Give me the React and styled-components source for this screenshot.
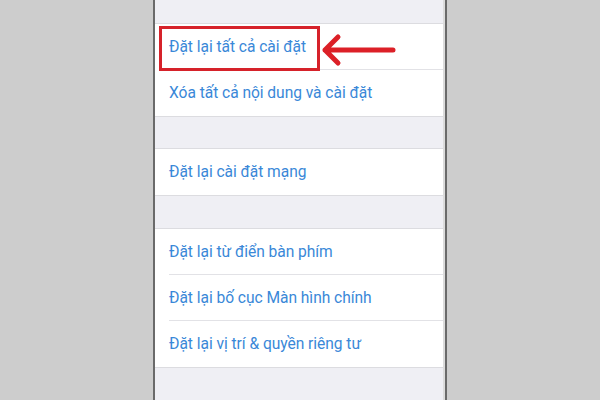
import React from "react";
import styled, { createGlobalStyle } from "styled-components";

const Global = createGlobalStyle`
  html, body { margin: 0; padding: 0; background: #cdcdcd; }
  body { font-family: Roboto, "Liberation Sans", Arial, sans-serif; }
`;

const Page = styled.div`
  display: flex;
  justify-content: center;
  height: 400px;
  overflow: hidden;
`;

const Phone = styled.div`
  width: 290px;
  height: 400px;
  background: #efeff4;
  border-left: 2px solid #6a6a6a;
  border-right: 2px solid #6a6a6a;
  box-shadow: inset -2px 0 0 #dcdcdc;
  display: flex;
  flex-direction: column;
  padding-top: 23px;
  box-sizing: content-box;
`;

const Group = styled.div`
  background: #fff;
  border-top: 1px solid #dcdce0;
  border-bottom: 1px solid #dcdce0;
  margin-bottom: ${(p) => p.$gap || 0}px;
  margin-right: 2px;
`;

const Row = styled.div`
  position: relative;
  height: 46px;
  padding-left: 14px;
  display: flex;
`;

const RowInner = styled.div`
  flex: 1;
  display: flex;
  align-items: center;
  border-bottom: ${(p) => (p.$last ? "none" : "1px solid #e2e2e6")};
  color: #3a88d8;
  font-size: 15.6px;
  letter-spacing: -0.05px;
`;

const Highlight = styled.div`
  position: absolute;
  left: 4px;
  top: 2px;
  width: 155px;
  height: 39px;
  border: 3px solid #d6222a;
  pointer-events: none;
`;

const Arrow = styled.svg`
  position: absolute;
  left: 166px;
  top: 9px;
`;

const Item = ({ children, last, marked }) => (
  <Row>
    <RowInner $last={last}>{children}</RowInner>
    {marked && (
      <>
        <Highlight />
        <Arrow width="80" height="34" viewBox="0 0 80 34">
          <path
            d="M4 17 H72 M17 4 L4 17 L17 30"
            fill="none"
            stroke="#dc2027"
            strokeWidth="5"
            strokeLinecap="round"
            strokeLinejoin="round"
          />
        </Arrow>
      </>
    )}
  </Row>
);

export default function App() {
  return (
    <>
      <Global />
      <Page>
        <Phone>
          <Group $gap={31}>
            <Item marked>Đặt lại tất cả cài đặt</Item>
            <Item last>Xóa tất cả nội dung và cài đặt</Item>
          </Group>
          <Group $gap={32}>
            <Item last>Đặt lại cài đặt mạng</Item>
          </Group>
          <Group>
            <Item>Đặt lại từ điển bàn phím</Item>
            <Item>Đặt lại bố cục Màn hình chính</Item>
            <Item last>Đặt lại vị trí &amp; quyền riêng tư</Item>
          </Group>
        </Phone>
      </Page>
    </>
  );
}
